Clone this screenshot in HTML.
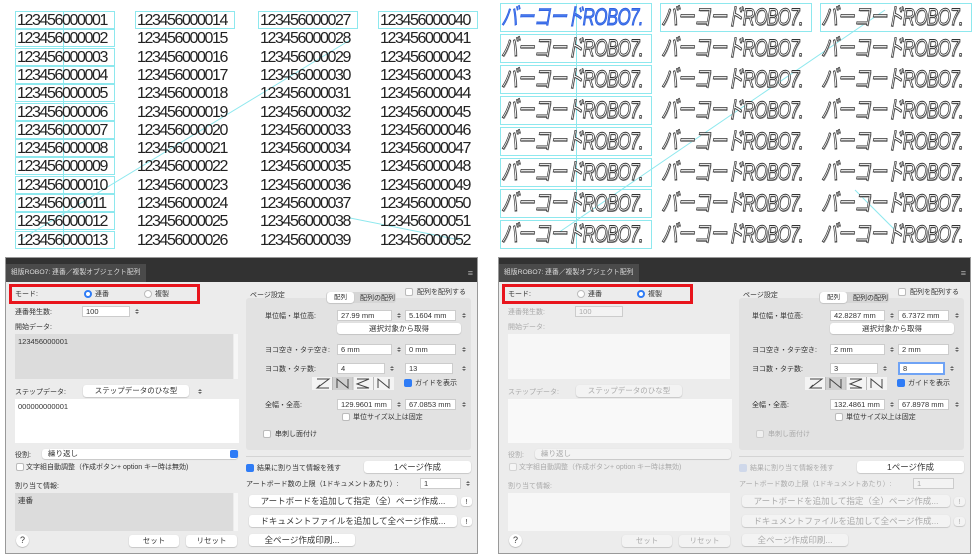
<!DOCTYPE html>
<html><head><meta charset="utf-8"><style>
*{box-sizing:border-box;margin:0;padding:0}
body{width:980px;height:560px;background:#fff;position:relative;overflow:hidden;font-family:"Liberation Sans","Noto Sans CJK JP",sans-serif}
.a{position:absolute}
.num{position:absolute;font-size:16px;letter-spacing:-1.4px;color:#222;line-height:18px;height:18px;border:1px solid #8ee8ee;padding-left:1px;width:100px}
.bc{position:absolute;height:29px;width:152px;border:1px solid #8ee8ee;white-space:nowrap;overflow:hidden}
.bc span{display:inline-block;font-size:24px;font-style:italic;color:#fff;-webkit-text-stroke:0.9px #333;text-shadow:1px 1px 0 #999;line-height:28px;transform:scaleX(.71);transform-origin:0 0;letter-spacing:-1px}
.bc.blue span{color:#4a7ef0;-webkit-text-stroke:0.9px #3060e0;text-shadow:none}
.nb{border-color:transparent}
.dlg{position:absolute;top:257px;width:473px;height:297px;background:#ececec;border:1px solid #999;font-size:7px;color:#333}
.tb{position:absolute;left:0;top:0;width:100%;height:24px;background:#323232}
.tab{position:absolute;left:0;top:6px;height:18px;width:140px;background:#4a4a4a;color:#ddd;font-size:6.8px;line-height:18px;padding-left:5px;white-space:nowrap;overflow:hidden}
.l{position:absolute;font-size:7px;white-space:nowrap;line-height:9px}
.in{position:absolute;background:#fff;border:1px solid #ccc;height:11px;font-size:7.5px;line-height:9px;padding-left:3px}
.st{position:absolute;width:6px;height:11px}
.st:before{content:"";position:absolute;left:1px;top:1px;border:2px solid transparent;border-bottom:2.5px solid #666}
.st:after{content:"";position:absolute;left:1px;top:6px;border:2px solid transparent;border-top:2.5px solid #666}
.btn{position:absolute;background:#fff;border-radius:3px;box-shadow:0 0.5px 1px #aaa;height:12px;font-size:7.5px;line-height:12px;text-align:center;white-space:nowrap}
.cb{position:absolute;width:8px;height:8px;background:#fff;border:1px solid #bbb;border-radius:2px}
.cbon{background:#2f7cf6;border-color:#2f7cf6}
.rad{position:absolute;width:8px;height:8px;border-radius:50%;background:#fff;border:1px solid #bbb}
.radon{border:2.5px solid #2f7cf6}
.gr{position:absolute;background:#dcdcdc}
.dis{color:#aaa}
</style></head><body>

<div class="a" style="left:63px;top:11px;width:1px;height:236px;background:#8ee8ee"></div>
<svg class="a" style="left:0;top:0" width="490" height="250"><line x1="20" y1="240" x2="350" y2="40" stroke="#8ee8ee" stroke-width="1"/><line x1="350" y1="218" x2="460" y2="240" stroke="#8ee8ee"/></svg>
<div class="num" style="left:15px;top:11px">123456000001</div>
<div class="num" style="left:15px;top:29.3px">123456000002</div>
<div class="num" style="left:15px;top:47.6px">123456000003</div>
<div class="num" style="left:15px;top:65.9px">123456000004</div>
<div class="num" style="left:15px;top:84.2px">123456000005</div>
<div class="num" style="left:15px;top:102.5px">123456000006</div>
<div class="num" style="left:15px;top:120.8px">123456000007</div>
<div class="num" style="left:15px;top:139.1px">123456000008</div>
<div class="num" style="left:15px;top:157.4px">123456000009</div>
<div class="num" style="left:15px;top:175.7px">123456000010</div>
<div class="num" style="left:15px;top:194px">123456000011</div>
<div class="num" style="left:15px;top:212.3px">123456000012</div>
<div class="num" style="left:15px;top:230.6px">123456000013</div>
<div class="num" style="left:135px;top:11px">123456000014</div>
<div class="num nb" style="left:135px;top:29.3px">123456000015</div>
<div class="num nb" style="left:135px;top:47.6px">123456000016</div>
<div class="num nb" style="left:135px;top:65.9px">123456000017</div>
<div class="num nb" style="left:135px;top:84.2px">123456000018</div>
<div class="num nb" style="left:135px;top:102.5px">123456000019</div>
<div class="num nb" style="left:135px;top:120.8px">123456000020</div>
<div class="num nb" style="left:135px;top:139.1px">123456000021</div>
<div class="num nb" style="left:135px;top:157.4px">123456000022</div>
<div class="num nb" style="left:135px;top:175.7px">123456000023</div>
<div class="num nb" style="left:135px;top:194px">123456000024</div>
<div class="num nb" style="left:135px;top:212.3px">123456000025</div>
<div class="num nb" style="left:135px;top:230.6px">123456000026</div>
<div class="num" style="left:258px;top:11px">123456000027</div>
<div class="num nb" style="left:258px;top:29.3px">123456000028</div>
<div class="num nb" style="left:258px;top:47.6px">123456000029</div>
<div class="num nb" style="left:258px;top:65.9px">123456000030</div>
<div class="num nb" style="left:258px;top:84.2px">123456000031</div>
<div class="num nb" style="left:258px;top:102.5px">123456000032</div>
<div class="num nb" style="left:258px;top:120.8px">123456000033</div>
<div class="num nb" style="left:258px;top:139.1px">123456000034</div>
<div class="num nb" style="left:258px;top:157.4px">123456000035</div>
<div class="num nb" style="left:258px;top:175.7px">123456000036</div>
<div class="num nb" style="left:258px;top:194px">123456000037</div>
<div class="num nb" style="left:258px;top:212.3px">123456000038</div>
<div class="num nb" style="left:258px;top:230.6px">123456000039</div>
<div class="num" style="left:378px;top:11px">123456000040</div>
<div class="num nb" style="left:378px;top:29.3px">123456000041</div>
<div class="num nb" style="left:378px;top:47.6px">123456000042</div>
<div class="num nb" style="left:378px;top:65.9px">123456000043</div>
<div class="num nb" style="left:378px;top:84.2px">123456000044</div>
<div class="num nb" style="left:378px;top:102.5px">123456000045</div>
<div class="num nb" style="left:378px;top:120.8px">123456000046</div>
<div class="num nb" style="left:378px;top:139.1px">123456000047</div>
<div class="num nb" style="left:378px;top:157.4px">123456000048</div>
<div class="num nb" style="left:378px;top:175.7px">123456000049</div>
<div class="num nb" style="left:378px;top:194px">123456000050</div>
<div class="num nb" style="left:378px;top:212.3px">123456000051</div>
<div class="num nb" style="left:378px;top:230.6px">123456000052</div>

<div class="a" style="left:576px;top:4px;width:1px;height:244px;background:#8ee8ee"></div>
<svg class="a" style="left:495px;top:0" width="485" height="250"><line x1="60" y1="235" x2="390" y2="10" stroke="#8ee8ee"/><line x1="360" y1="190" x2="400" y2="230" stroke="#8ee8ee"/></svg>
<div class="bc blue" style="left:500px;top:3px"><span>バーコードROBO7.</span></div>
<div class="bc" style="left:660px;top:3px"><span>バーコードROBO7.</span></div>
<div class="bc" style="left:820px;top:3px"><span>バーコードROBO7.</span></div>
<div class="bc" style="left:500px;top:34px"><span>バーコードROBO7.</span></div>
<div class="bc nb" style="left:660px;top:34px"><span>バーコードROBO7.</span></div>
<div class="bc nb" style="left:820px;top:34px"><span>バーコードROBO7.</span></div>
<div class="bc" style="left:500px;top:65px"><span>バーコードROBO7.</span></div>
<div class="bc nb" style="left:660px;top:65px"><span>バーコードROBO7.</span></div>
<div class="bc nb" style="left:820px;top:65px"><span>バーコードROBO7.</span></div>
<div class="bc" style="left:500px;top:96px"><span>バーコードROBO7.</span></div>
<div class="bc nb" style="left:660px;top:96px"><span>バーコードROBO7.</span></div>
<div class="bc nb" style="left:820px;top:96px"><span>バーコードROBO7.</span></div>
<div class="bc" style="left:500px;top:127px"><span>バーコードROBO7.</span></div>
<div class="bc nb" style="left:660px;top:127px"><span>バーコードROBO7.</span></div>
<div class="bc nb" style="left:820px;top:127px"><span>バーコードROBO7.</span></div>
<div class="bc" style="left:500px;top:158px"><span>バーコードROBO7.</span></div>
<div class="bc nb" style="left:660px;top:158px"><span>バーコードROBO7.</span></div>
<div class="bc nb" style="left:820px;top:158px"><span>バーコードROBO7.</span></div>
<div class="bc" style="left:500px;top:189px"><span>バーコードROBO7.</span></div>
<div class="bc nb" style="left:660px;top:189px"><span>バーコードROBO7.</span></div>
<div class="bc nb" style="left:820px;top:189px"><span>バーコードROBO7.</span></div>
<div class="bc" style="left:500px;top:220px"><span>バーコードROBO7.</span></div>
<div class="bc nb" style="left:660px;top:220px"><span>バーコードROBO7.</span></div>
<div class="bc nb" style="left:820px;top:220px"><span>バーコードROBO7.</span></div>

<!-- LEFT DIALOG -->
<div class="dlg" style="left:5px">
 <div class="tb"><div class="tab">組版ROBO7: 連番／複製オブジェクト配列</div><div class="l" style="right:4px;top:11px;color:#aaa;font-size:9px">≡</div></div>
 <div class="a" style="left:3px;top:26px;width:191px;height:20px;border:3px solid #e8141c"></div>
 <div class="l" style="left:9px;top:32px">モード:</div>
 <div class="rad radon" style="left:78px;top:32px"></div><div class="l" style="left:89px;top:32px">連番</div>
 <div class="rad" style="left:138px;top:32px"></div><div class="l" style="left:149px;top:32px">複製</div>
 <div class="l" style="left:9px;top:50px">連番発生数:</div>
 <div class="in" style="left:76px;top:48px;width:48px">100</div><div class="st" style="left:128px;top:48px"></div>
 <div class="l" style="left:9px;top:65px">開始データ:</div>
 <div class="gr" style="left:9px;top:76px;width:218px;height:45px"></div><div class="a" style="left:228px;top:76px;width:4px;height:45px;background:#f6f6f6"></div>
 <div class="l" style="left:12px;top:79px;font-size:7.5px">123456000001</div>
 <div class="l" style="left:9px;top:130px">ステップデータ:</div>
 <div class="btn" style="left:77px;top:127px;width:106px">ステップデータのひな型</div><div class="st" style="left:191px;top:128px"></div>
 <div class="a" style="left:9px;top:141px;width:224px;height:44px;background:#fff"></div>
 <div class="l" style="left:12px;top:144px;font-size:7.5px">000000000001</div>
 <div class="l" style="left:9px;top:193px">役割:</div>
 <div class="btn" style="left:36px;top:191px;width:196px;text-align:left;padding-left:6px;height:10px;line-height:10px">繰り返し</div>
 <div class="a" style="left:224px;top:192px;width:8px;height:8px;background:#2f7cf6;border-radius:2px"></div>
 <div class="cb" style="left:10px;top:205px"></div><div class="l" style="left:20px;top:205px">文字組自動調整（作成ボタン+ option キー時は無効)</div>
 <div class="l" style="left:9px;top:224px">割り当て情報:</div>
 <div class="gr" style="left:9px;top:235px;width:218px;height:38px"></div><div class="a" style="left:228px;top:235px;width:4px;height:38px;background:#f6f6f6"></div>
 <div class="l" style="left:12px;top:238px;font-size:7.5px">連番</div>
 <div class="a" style="left:10px;top:276px;width:13px;height:13px;border-radius:50%;background:#fff;box-shadow:0 0.5px 1px #999;font-size:9px;text-align:center;line-height:13px">?</div>
 <div class="btn" style="left:123px;top:277px;width:50px">セット</div>
 <div class="btn" style="left:180px;top:277px;width:51px">リセット</div>
 <div class="l" style="left:244px;top:33px">ページ設定</div>
 <div class="a" style="left:240px;top:40px;width:225px;height:152px;background:#e2e2e2;border-radius:3px"></div>
 <div class="a" style="left:320px;top:34px;width:70px;height:11px;background:#d6d6d6;border-radius:3px"></div>
 <div class="btn" style="left:321px;top:34px;width:27px;height:11px;line-height:11px;font-size:6.5px">配列</div><div class="l" style="left:354px;top:36px">配列の配列</div>
 <div class="cb" style="left:399px;top:30px"></div><div class="l" style="left:411px;top:30px">配列を配列する</div>
 <div class="l" style="left:259px;top:54px">単位幅・単位高:</div>
 <div class="in" style="left:331px;top:52px;width:55px">27.99 mm</div><div class="st" style="left:390px;top:52px"></div>
 <div class="in" style="left:399px;top:52px;width:51px">5.1604 mm</div><div class="st" style="left:455px;top:52px"></div>
 <div class="btn" style="left:331px;top:65px;width:124px;height:11px;line-height:11px">選択対象から取得</div>
 <div class="l" style="left:259px;top:88px">ヨコ空き・タテ空き:</div>
 <div class="in" style="left:331px;top:86px;width:55px">6 mm</div><div class="st" style="left:390px;top:86px"></div>
 <div class="in" style="left:399px;top:86px;width:51px">0 mm</div><div class="st" style="left:455px;top:86px"></div>
 <div class="l" style="left:259px;top:107px">ヨコ数・タテ数:</div>
 <div class="in" style="left:331px;top:105px;width:48px">4</div><div class="st" style="left:383px;top:105px"></div>
 <div class="in" style="left:399px;top:105px;width:48px">13</div><div class="st" style="left:455px;top:105px"></div>
 <svg class="a" style="left:306px;top:119px" width="82" height="13"><rect width="82" height="13" fill="#f4f4f4"/><rect x="21" width="20" height="13" fill="#d0d0d0"/><g stroke="#444" fill="none" stroke-width="1"><path d="M5 2h12L5 11h12M5 11l3-3"/><path d="M25 11V2l11 9V2"/><path d="M45 2h12L45 7l12 4H45"/><path d="M66 11V2l11 9V2"/></g><g stroke="#bbb"><line x1="20.5" y1="0" x2="20.5" y2="13"/><line x1="41" y1="0" x2="41" y2="13"/><line x1="61.5" y1="0" x2="61.5" y2="13"/></g></svg>
 <div class="cb cbon" style="left:398px;top:121px"></div><div class="l" style="left:409px;top:121px">ガイドを表示</div>
 <div class="l" style="left:259px;top:143px">全幅・全高:</div>
 <div class="in" style="left:331px;top:141px;width:55px">129.9601 mm</div><div class="st" style="left:390px;top:141px"></div>
 <div class="in" style="left:399px;top:141px;width:51px">67.0853 mm</div><div class="st" style="left:455px;top:141px"></div>
 <div class="cb" style="left:336px;top:155px"></div><div class="l" style="left:347px;top:155px">単位サイズ以上は固定</div>
 <div class="cb" style="left:257px;top:172px"></div><div class="l" style="left:269px;top:172px">串刺し面付け</div>
 <div class="a" style="left:240px;top:198px;width:225px;height:1px;background:#d4d4d4"></div>
 <div class="cb cbon" style="left:240px;top:206px"></div><div class="l" style="left:251px;top:206px">結果に割り当て情報を残す</div>
 <div class="btn" style="left:358px;top:203px;width:107px;font-size:8.5px">1ページ作成</div>
 <div class="l" style="left:240px;top:222px">アートボード数の上限（1ドキュメントあたり）:</div>
 <div class="in" style="left:414px;top:220px;width:41px">1</div><div class="st" style="left:459px;top:220px"></div>
 <div class="btn" style="left:243px;top:237px;width:208px;font-size:8.5px">アートボードを追加して指定（全）ページ作成...</div>
 <div class="btn" style="left:455px;top:239px;width:11px;height:9px;line-height:9px">!</div>
 <div class="btn" style="left:243px;top:257px;width:208px;font-size:8.5px">ドキュメントファイルを追加して全ページ作成...</div>
 <div class="btn" style="left:455px;top:259px;width:11px;height:9px;line-height:9px">!</div>
 <div class="btn" style="left:243px;top:276px;width:106px;font-size:8.5px">全ページ作成印刷...</div>
</div>

<!-- RIGHT DIALOG -->
<div class="dlg" style="left:498px">
 <div class="tb"><div class="tab">組版ROBO7: 連番／複製オブジェクト配列</div><div class="l" style="right:4px;top:11px;color:#aaa;font-size:9px">≡</div></div>
 <div class="a" style="left:3px;top:26px;width:191px;height:20px;border:3px solid #e8141c"></div>
 <div class="l" style="left:9px;top:32px">モード:</div>
 <div class="rad" style="left:78px;top:32px"></div><div class="l" style="left:89px;top:32px">連番</div>
 <div class="rad radon" style="left:138px;top:32px"></div><div class="l" style="left:149px;top:32px">複製</div>
 <div class="l dis" style="left:9px;top:50px">連番発生数:</div>
 <div class="in dis" style="left:76px;top:48px;width:48px;background:#f3f3f3">100</div>
 <div class="l dis" style="left:9px;top:65px">開始データ:</div>
 <div class="a" style="left:9px;top:76px;width:222px;height:45px;background:#f7f7f7"></div>
 <div class="l dis" style="left:9px;top:130px">ステップデータ:</div>
 <div class="btn dis" style="left:77px;top:127px;width:106px;background:#f3f3f3">ステップデータのひな型</div>
 <div class="a" style="left:9px;top:141px;width:224px;height:44px;background:#f9f9f9"></div>
 <div class="l dis" style="left:9px;top:193px">役割:</div>
 <div class="btn dis" style="left:36px;top:191px;width:196px;text-align:left;padding-left:6px;height:10px;line-height:10px;background:#f3f3f3">繰り返し</div>
 <div class="cb" style="left:10px;top:205px;opacity:.5"></div><div class="l dis" style="left:20px;top:205px">文字組自動調整（作成ボタン+ option キー時は無効)</div>
 <div class="l dis" style="left:9px;top:224px">割り当て情報:</div>
 <div class="a" style="left:9px;top:235px;width:222px;height:38px;background:#f7f7f7"></div>
 <div class="a" style="left:10px;top:276px;width:13px;height:13px;border-radius:50%;background:#fff;box-shadow:0 0.5px 1px #999;font-size:9px;text-align:center;line-height:13px">?</div>
 <div class="btn dis" style="left:123px;top:277px;width:50px;background:#f3f3f3">セット</div>
 <div class="btn dis" style="left:180px;top:277px;width:51px;background:#f3f3f3">リセット</div>
 <div class="l" style="left:244px;top:33px">ページ設定</div>
 <div class="a" style="left:240px;top:40px;width:225px;height:152px;background:#e2e2e2;border-radius:3px"></div>
 <div class="a" style="left:320px;top:34px;width:70px;height:11px;background:#d6d6d6;border-radius:3px"></div>
 <div class="btn" style="left:321px;top:34px;width:27px;height:11px;line-height:11px;font-size:6.5px">配列</div><div class="l" style="left:354px;top:36px">配列の配列</div>
 <div class="cb" style="left:399px;top:30px"></div><div class="l" style="left:411px;top:30px">配列を配列する</div>
 <div class="l" style="left:253px;top:54px">単位幅・単位高:</div>
 <div class="in" style="left:331px;top:52px;width:55px">42.8287 mm</div><div class="st" style="left:390px;top:52px"></div>
 <div class="in" style="left:399px;top:52px;width:51px">6.7372 mm</div><div class="st" style="left:455px;top:52px"></div>
 <div class="btn" style="left:331px;top:65px;width:124px;height:11px;line-height:11px">選択対象から取得</div>
 <div class="l" style="left:253px;top:88px">ヨコ空き・タテ空き:</div>
 <div class="in" style="left:331px;top:86px;width:55px">2 mm</div><div class="st" style="left:390px;top:86px"></div>
 <div class="in" style="left:399px;top:86px;width:51px">2 mm</div><div class="st" style="left:455px;top:86px"></div>
 <div class="l" style="left:253px;top:107px">ヨコ数・タテ数:</div>
 <div class="in" style="left:331px;top:105px;width:48px">3</div><div class="st" style="left:383px;top:105px"></div>
 <div class="in" style="left:399px;top:104px;width:47px;height:13px;border:2px solid #6fa3f5">8</div><div class="st" style="left:450px;top:105px"></div>
 <svg class="a" style="left:306px;top:119px" width="82" height="13"><rect width="82" height="13" fill="#f4f4f4"/><rect x="21" width="20" height="13" fill="#d0d0d0"/><g stroke="#444" fill="none" stroke-width="1"><path d="M5 2h12L5 11h12M5 11l3-3"/><path d="M25 11V2l11 9V2"/><path d="M45 2h12L45 7l12 4H45"/><path d="M66 11V2l11 9V2"/></g><g stroke="#bbb"><line x1="20.5" y1="0" x2="20.5" y2="13"/><line x1="41" y1="0" x2="41" y2="13"/><line x1="61.5" y1="0" x2="61.5" y2="13"/></g></svg>
 <div class="cb cbon" style="left:398px;top:121px"></div><div class="l" style="left:409px;top:121px">ガイドを表示</div>
 <div class="l" style="left:253px;top:143px">全幅・全高:</div>
 <div class="in" style="left:331px;top:141px;width:55px">132.4861 mm</div><div class="st" style="left:390px;top:141px"></div>
 <div class="in" style="left:399px;top:141px;width:51px">67.8978 mm</div><div class="st" style="left:455px;top:141px"></div>
 <div class="cb" style="left:336px;top:155px"></div><div class="l" style="left:347px;top:155px">単位サイズ以上は固定</div>
 <div class="cb" style="left:257px;top:172px;opacity:.5"></div><div class="l dis" style="left:269px;top:172px">串刺し面付け</div>
 <div class="a" style="left:240px;top:198px;width:225px;height:1px;background:#d4d4d4"></div>
 <div class="cb" style="left:240px;top:206px;background:#cfd8ea;border-color:#cfd8ea"></div><div class="l dis" style="left:251px;top:206px">結果に割り当て情報を残す</div>
 <div class="btn" style="left:358px;top:203px;width:107px;font-size:8.5px">1ページ作成</div>
 <div class="l dis" style="left:240px;top:222px">アートボード数の上限（1ドキュメントあたり）:</div>
 <div class="in dis" style="left:414px;top:220px;width:41px;background:#f3f3f3">1</div>
 <div class="btn dis" style="left:243px;top:237px;width:208px;font-size:8.5px;background:#f3f3f3">アートボードを追加して指定（全）ページ作成...</div>
 <div class="btn dis" style="left:455px;top:239px;width:11px;height:9px;line-height:9px;background:#f3f3f3">!</div>
 <div class="btn dis" style="left:243px;top:257px;width:208px;font-size:8.5px;background:#f3f3f3">ドキュメントファイルを追加して全ページ作成...</div>
 <div class="btn dis" style="left:455px;top:259px;width:11px;height:9px;line-height:9px;background:#f3f3f3">!</div>
 <div class="btn dis" style="left:243px;top:276px;width:106px;font-size:8.5px;background:#f3f3f3">全ページ作成印刷...</div>
</div>
</body></html>
